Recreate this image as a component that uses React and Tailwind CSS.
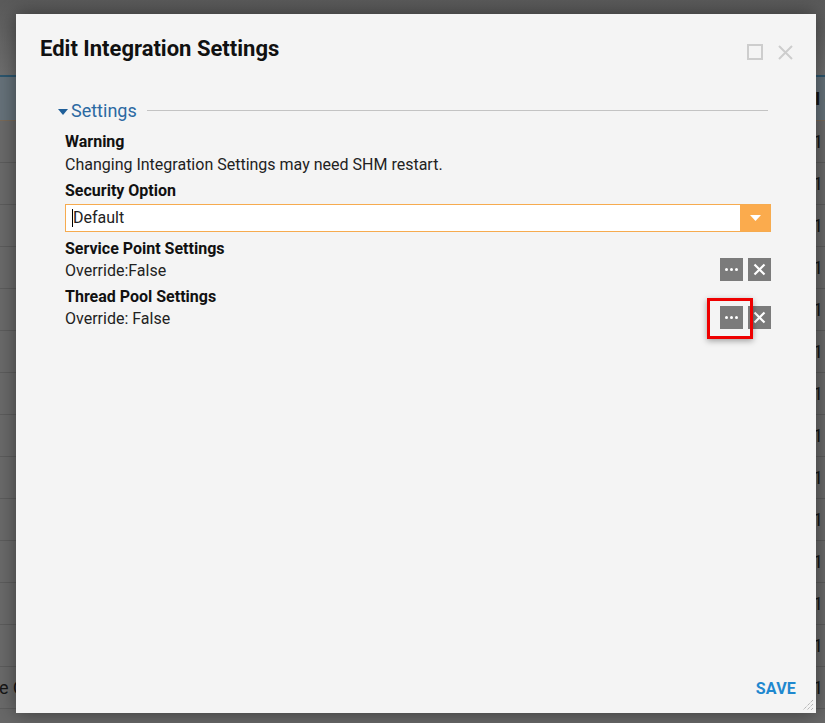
import React from "react";

const rows = Array.from({ length: 14 });

function DotsButton() {
  return (
    <div className="w-[23px] h-[23px] bg-[#7b7b7b] flex items-center justify-center gap-[2px]">
      <span className="w-[3px] h-[3px] bg-white rounded-full" />
      <span className="w-[3px] h-[3px] bg-white rounded-full" />
      <span className="w-[3px] h-[3px] bg-white rounded-full" />
    </div>
  );
}

function XButton() {
  return (
    <div className="w-[23px] h-[23px] bg-[#7b7b7b] flex items-center justify-center">
      <svg width="13" height="13" viewBox="0 0 13 13">
        <path d="M1.5 1.5 L11.5 11.5 M11.5 1.5 L1.5 11.5" stroke="white" strokeWidth="2.2" />
      </svg>
    </div>
  );
}

function SettingRow({ title, value, highlighted }) {
  return (
    <div className="flex flex-col">
      <div className="h-[22px] leading-[22px] text-[16px] font-bold text-[#111]">{title}</div>
      <div className="h-[22px] flex items-center justify-between">
        <span className="text-[16px] leading-[22px] text-[#222]">{value}</span>
        <div className="flex items-center gap-[5px] -mt-[4px]">
          <div className="relative">
            <DotsButton />
            {highlighted && (
              <div className="absolute left-[-13px] top-[-8px] w-[46px] h-[41px] border-[3px] border-[#ee0000] shadow-[0_2px_6px_rgba(0,0,0,0.35)]" />
            )}
          </div>
          <XButton />
        </div>
      </div>
    </div>
  );
}

export default function App() {
  return (
    <div
      className="relative w-[825px] h-[723px] overflow-hidden bg-[#686868]"
      style={{ fontFamily: "Roboto, 'Liberation Sans', sans-serif" }}
    >
      {/* dimmed background page */}
      <div className="flex flex-col">
        <div className="h-[75px] bg-gradient-to-b from-[#5a5a5a] to-[#6e6e6e]" />
        <div className="h-[46px] border-t-[2px] border-[#2c566e] bg-[#66727a] border-b border-b-[#7a6a58] flex items-center">
          <span className="text-[18px] font-bold text-[#151515] pl-[815px] whitespace-nowrap">I c</span>
        </div>
        {rows.map((_, i) => (
          <div
            key={i}
            className="h-[42px] border-b border-[#5c5c5c] bg-[#6a6a6a] flex items-center justify-between"
          >
            <span className="text-[18px] text-[#161616] whitespace-nowrap -ml-[1px]">
              {i === 13 ? "e Q" : ""}
            </span>
            <span className="text-[18px] leading-[22px] text-[#161616] pr-[2px]">1</span>
          </div>
        ))}
      </div>

      {/* dialog */}
      <div className="absolute left-[16px] top-[14px] w-[800px] h-[699px] bg-[#f4f4f4] shadow-[0_0_18px_rgba(0,0,0,0.45)] flex flex-col">
        {/* header */}
        <div className="flex items-start justify-between pl-[24px] pr-[23px] pt-[21px]">
          <h1 className="text-[22px] leading-[28px] font-bold text-[#111]">Edit Integration Settings</h1>
          <div className="flex items-center gap-[15px] mt-[9px]">
            <div className="w-[16px] h-[16px] border-[2px] border-[#cdcdcd]" />
            <svg width="15" height="15" viewBox="0 0 15 15">
              <path d="M1 1 L14 14 M14 1 L1 14" stroke="#cdcdcd" strokeWidth="2" />
            </svg>
          </div>
        </div>

        {/* fieldset */}
        <div className="pl-[42px] pr-[48px] mt-[36px]">
          <div className="flex items-center h-[24px]">
            <svg width="10" height="6" viewBox="0 0 10 6" className="mt-[2px]">
              <path d="M0 0 L10 0 L5 6 Z" fill="#1f5f99" />
            </svg>
            <span className="ml-[3px] text-[18px] leading-[24px] text-[#2b69a2]">Settings</span>
            <div className="flex-1 ml-[10px] h-px bg-[#c3c3c3] -mt-[2px]" />
          </div>

          <div className="pl-[7px] mr-[-3px] mt-[7px] flex flex-col">
            <div className="h-[23px] leading-[23px] text-[16px] font-bold text-[#111]">Warning</div>
            <div className="h-[24px] leading-[24px] text-[16px] text-[#222]">
              Changing Integration Settings may need SHM restart.
            </div>
            <div className="h-[23px] leading-[23px] text-[16px] font-bold text-[#111] mt-[2px]">Security Option</div>
            <div className="mt-[2px] h-[28px] flex border border-[#f6ab4f] bg-white">
              <div className="flex-1 flex items-center pl-[6px]">
                <span className="w-px h-[18px] bg-black" />
                <span className="text-[16px] text-[#222]">Default</span>
              </div>
              <div className="w-[30px] bg-[#fbab4d] flex items-center justify-center">
                <svg width="11" height="6" viewBox="0 0 11 6">
                  <path d="M0 0 L11 0 L5.5 6 Z" fill="white" />
                </svg>
              </div>
            </div>
            <div className="mt-[6px] flex flex-col gap-[4px]">
              <SettingRow title="Service Point Settings" value="Override:False" />
              <SettingRow title="Thread Pool Settings" value="Override: False" highlighted />
            </div>
          </div>
        </div>

        <div className="flex-1" />

        {/* footer */}
        <div className="flex justify-end pr-[20px] pb-[13px]">
          <span className="text-[16px] leading-[22px] font-bold text-[#1f88cf] tracking-[0.2px]">SAVE</span>
        </div>

        {/* resize grip */}
        <svg className="absolute right-[2px] bottom-[2px]" width="12" height="12" viewBox="0 0 12 12">
          <path d="M11 1 L1 11 M11 5 L5 11 M11 9 L9 11" stroke="#9a9a9a" strokeWidth="1" strokeDasharray="1 1" />
        </svg>
      </div>
    </div>
  );
}
